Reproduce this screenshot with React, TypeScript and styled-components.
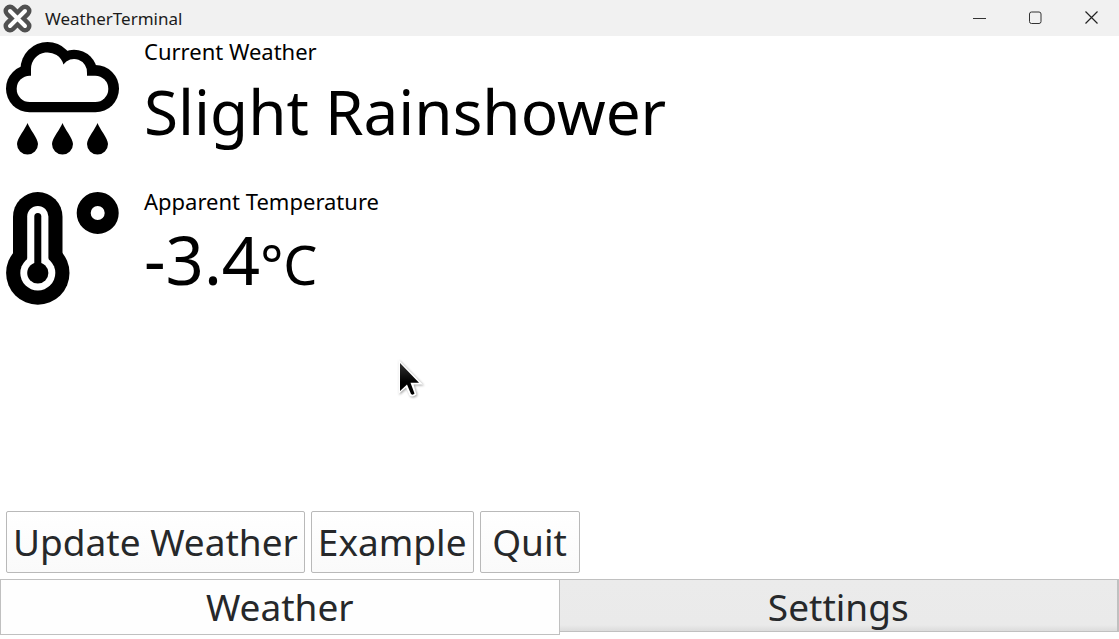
import { useState } from "react";
import styled, { createGlobalStyle } from "styled-components";

const GlobalStyle = createGlobalStyle`
  *, *::before, *::after { box-sizing: border-box; }
  body {
    margin: 0;
    background: #fff;
    color: #000;
    font-family: "Noto Sans", sans-serif;
  }
  button { font-family: inherit; }
`;

const Window = styled.div`
  display: flex;
  flex-direction: column;
  min-height: 100vh;
  padding-bottom: 4px;
`;

const TitleBar = styled.header`
  display: flex;
  align-items: center;
  height: 36px;
  padding-left: 3px;
  background: #f1f1f1;
`;

const Title = styled.h1`
  flex: 1;
  margin: 0 0 0 13px;
  padding-top: 2px;
  font-size: 17px;
  line-height: 24px;
  font-weight: 400;
  color: #1b1b1b;
`;

const WindowButton = styled.button`
  display: flex;
  align-items: center;
  justify-content: center;
  width: 56px;
  height: 36px;
  padding: 0;
  border: 0;
  background: transparent;
`;

const Main = styled.main`
  flex: 1;
`;

const Reading = styled.section`
  display: flex;
  gap: 19px;
  height: 150px;
`;

const ReadingText = styled.div`
  min-width: 0;
`;

const Label = styled.h2`
  margin: 0;
  font-size: 22px;
  line-height: 30px;
  font-weight: 400;
`;

const Value = styled.p<{ $size: number; $line: number }>`
  margin: 0;
  font-size: ${(p) => p.$size}px;
  line-height: ${(p) => p.$line}px;
  white-space: nowrap;
`;

const Unit = styled.span`
  font-size: 54px;
  line-height: 1;
`;

const Actions = styled.div`
  display: flex;
  gap: 6px;
  padding: 6px;
`;

const ActionButton = styled.button`
  min-width: 100px;
  height: 62px;
  padding: 0 6px;
  border: 1px solid #b9b9b9;
  border-radius: 2px;
  background: linear-gradient(#fff, #fafafa);
  color: #26282a;
  font-size: 37px;
  line-height: 56px;
  white-space: nowrap;
`;

const Tabs = styled.nav`
  display: flex;
  align-items: flex-start;
  height: 56px;
`;

const Tab = styled.button<{ $active: boolean }>`
  flex: 1;
  height: ${(p) => (p.$active ? 56 : 53)}px;
  padding: ${(p) => (p.$active ? "0" : "2px 0 0")};
  border: 1px solid #c0c0c0;
  border-left-width: ${(p) => (p.$active ? 1 : 0)}px;
  border-right-width: ${(p) => (p.$active ? 1 : 2)}px;
  background: ${(p) =>
    p.$active ? "#fefefe" : "linear-gradient(#ebebeb, #eaeaea 88%, #dcdcdc)"};
  color: #26282a;
  font-size: 37px;
  line-height: 50px;
`;

const Pointer = styled.svg`
  position: absolute;
  left: 396px;
  top: 357px;
  pointer-events: none;
  filter: drop-shadow(1px 1px 1px rgba(0, 0, 0, 0.35));
`;

const AppLogo = () => (
  <svg width="29" height="29" viewBox="0 0 29 29" aria-hidden="true">
    <g fill="none" strokeLinecap="round">
      <path d="M7 7 22 22M22 7 7 22" stroke="#505050" strokeWidth="13" />
      <path d="M7 7 22 22M22 7 7 22" stroke="#fff" strokeWidth="4" />
    </g>
  </svg>
);

const RainCloud = () => (
  <svg width="125" height="125" viewBox="0 0 125 125" aria-hidden="true">
    <g>
      <rect x="6" y="29" width="113" height="47.3" rx="23.6" />
      <circle cx="47.5" cy="33" r="27" />
      <circle cx="74" cy="37" r="23.3" />
    </g>
    <g fill="#fff">
      <rect x="16.7" y="39.7" width="91.6" height="26.3" rx="13.1" />
      <path d="M31 33a16.5 16.5 0 0 1 32.4-4.5A13 13 0 0 1 87 37v8H31z" />
    </g>
    {[27.5, 62.5, 97.5].map((x) => (
      <path
        key={x}
        transform={`translate(${x} 87)`}
        d="M0 0C1.5 5 10.5 15.5 10.5 21A10.5 10.5 0 0 1-10.5 21C-10.5 15.5-1.5 5 0 0z"
      />
    ))}
  </svg>
);

const Thermometer = () => (
  <svg width="125" height="125" viewBox="0 0 125 125" aria-hidden="true">
    <rect x="13" y="6" width="49.5" height="90" rx="24.7" />
    <circle cx="37.8" cy="87" r="31.7" />
    <g fill="#fff">
      <rect x="27.2" y="20" width="21.2" height="70" rx="10.6" />
      <circle cx="37.8" cy="87" r="17.5" />
    </g>
    <rect x="34.3" y="27" width="7" height="55" rx="3.5" />
    <circle cx="37.8" cy="87" r="10.6" />
    <circle cx="97.7" cy="27" r="14" fill="none" stroke="#000" strokeWidth="14" />
  </svg>
);

export default function App() {
  const [tab, setTab] = useState("Weather");

  return (
    <Window>
      <GlobalStyle />
      <TitleBar>
        <AppLogo />
        <Title>WeatherTerminal</Title>
        <WindowButton aria-label="Minimize">
          <svg width="14" height="14" fill="none" stroke="#333">
            <path d="M1 7.5H14" />
          </svg>
        </WindowButton>
        <WindowButton aria-label="Maximize">
          <svg width="14" height="14" fill="none" stroke="#333">
            <rect x="1.5" y="1" width="11.5" height="11.5" rx="2" />
          </svg>
        </WindowButton>
        <WindowButton aria-label="Close">
          <svg width="14" height="14" fill="none" stroke="#222" strokeWidth="1.2">
            <path d="M1.5 0.5 13.5 12.5M13.5 0.5 1.5 12.5" />
          </svg>
        </WindowButton>
      </TitleBar>

      <Main>
        <Reading>
          <RainCloud />
          <ReadingText>
            <Label>Current Weather</Label>
            <Value $size={62} $line={90}>Slight Rainshower</Value>
          </ReadingText>
        </Reading>
        <Reading>
          <Thermometer />
          <ReadingText>
            <Label>Apparent Temperature</Label>
            <Value $size={67} $line={86}>
              -3.4<Unit>°C</Unit>
            </Value>
          </ReadingText>
        </Reading>
      </Main>

      <Actions>
        <ActionButton>Update Weather</ActionButton>
        <ActionButton>Example</ActionButton>
        <ActionButton>Quit</ActionButton>
      </Actions>

      <Tabs role="tablist">
        {["Weather", "Settings"].map((name) => (
          <Tab
            key={name}
            role="tab"
            aria-selected={tab === name}
            $active={tab === name}
            onClick={() => setTab(name)}
          >
            {name}
          </Tab>
        ))}
      </Tabs>

      <Pointer width="32" height="44" viewBox="0 0 32 44" aria-hidden="true">
        <defs>
          <linearGradient id="pointer-fill" x1="0" y1="0" x2="0" y2="1">
            <stop offset="0" stopColor="#333" />
            <stop offset="0.6" stopColor="#000" />
          </linearGradient>
        </defs>
        <path
          d="M2.5 2.5V37L10 30.5 13.5 38.5Q16.5 41 20.5 37.5L17.5 27.5H27z"
          fill="#fff"
        />
        <path
          d="M4 6V34L11 27.5 15 37Q17 38.5 18.5 36.5L14.5 25.8H23z"
          fill="url(#pointer-fill)"
        />
      </Pointer>
    </Window>
  );
}
